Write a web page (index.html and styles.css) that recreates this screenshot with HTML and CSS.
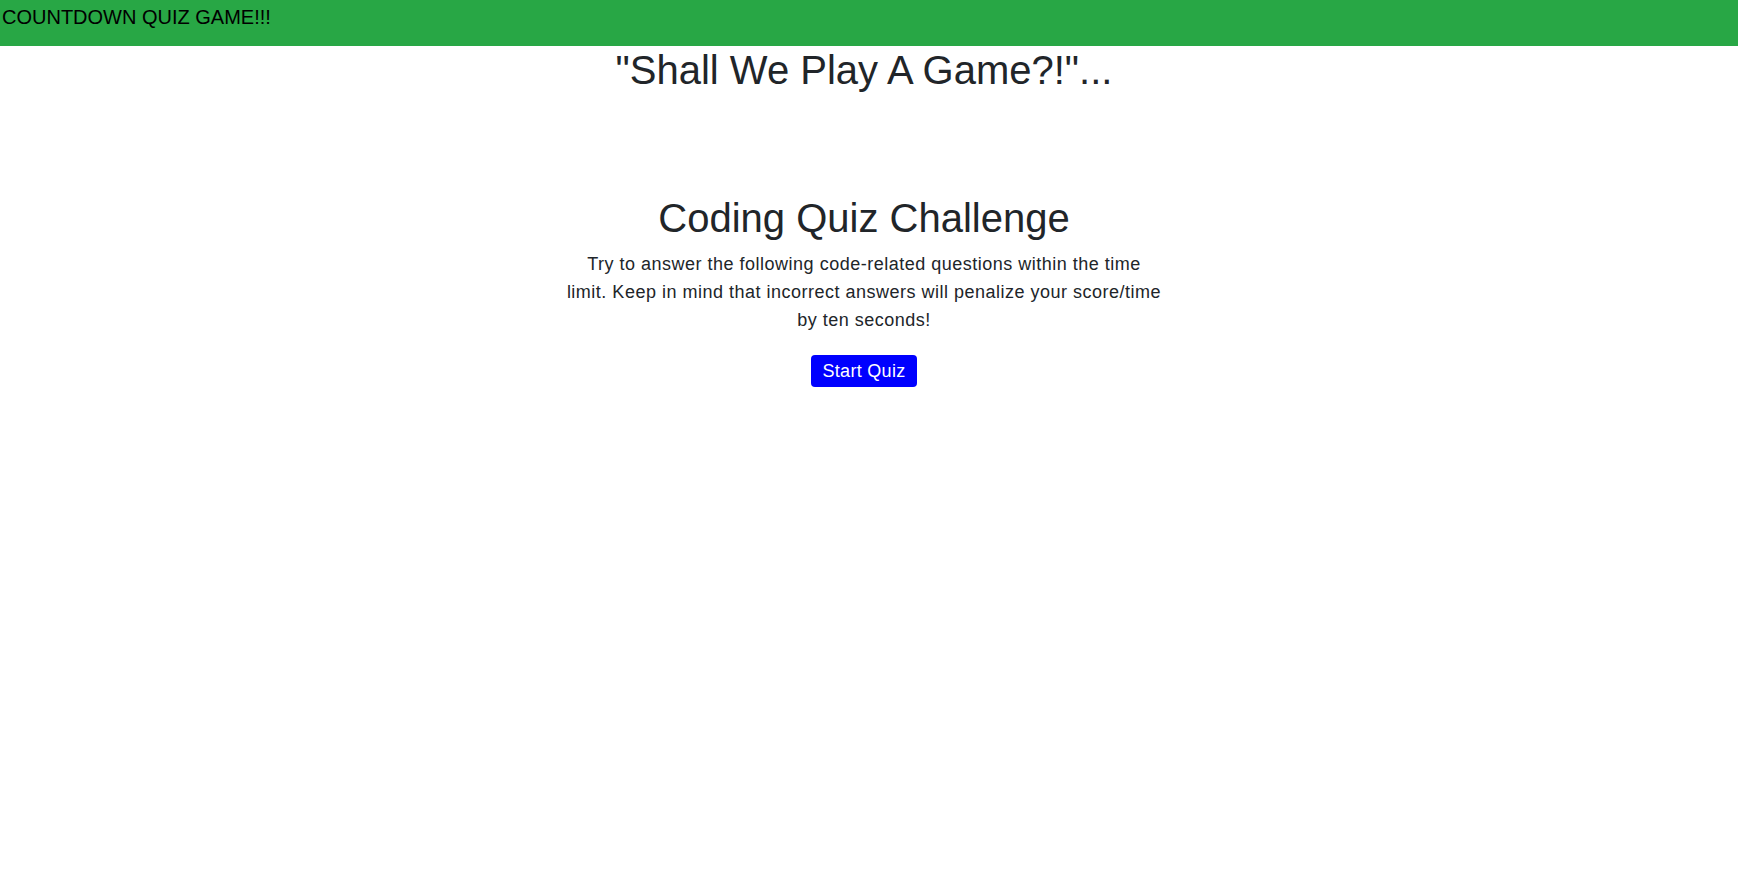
FILE: index.html
```html
<!DOCTYPE html>
<html lang="en">
<head>
<meta charset="utf-8">
<title>Countdown Quiz Game</title>
<link rel="stylesheet" href="styles.css">
</head>
<body>
<header class="topbar">COUNTDOWN QUIZ GAME!!!</header>
<main class="main">
  <h1 class="tagline">"Shall We Play A Game?!"...</h1>
  <section class="intro">
    <h2 class="intro-title">Coding Quiz Challenge</h2>
    <p class="intro-text">Try to answer the following code-related questions within the time limit. Keep in mind that incorrect answers will penalize your score/time by ten seconds!</p>
    <button class="start-btn" type="button">Start Quiz</button>
  </section>
</main>
</body>
</html>
```
FILE: styles.css
```css
html, body {
  margin: 0;
  padding: 0;
  background: #fff;
}
body {
  font-family: "Liberation Sans", Arial, sans-serif;
  color: #212529;
}
.topbar {
  box-sizing: border-box;
  height: 46px;
  padding: 2px 2px 0;
  background: #28a745;
  color: #000;
  font-size: 20px;
  line-height: 30px;
}
.main {
  display: flex;
  flex-direction: column;
  align-items: center;
  padding-right: 10px;
}
.tagline {
  margin: 0;
  font-size: 40px;
  font-weight: 400;
  line-height: 48px;
}
.intro {
  display: flex;
  flex-direction: column;
  align-items: center;
  width: 596px;
  margin-top: 100px;
  text-align: center;
}
.intro-title {
  margin: 0 0 8px;
  font-size: 40px;
  font-weight: 400;
  line-height: 48px;
}
.intro-text {
  margin: 0 0 21px;
  font-size: 18px;
  line-height: 28px;
  letter-spacing: 0.5px;
}
.start-btn {
  box-sizing: border-box;
  height: 32px;
  padding: 0 11px;
  border: 0;
  border-radius: 4px;
  background: #0000ff;
  color: #fff;
  font-family: "Liberation Sans", Arial, sans-serif;
  font-size: 18px;
  line-height: 32px;
  letter-spacing: 0.3px;
  cursor: pointer;
}
```
